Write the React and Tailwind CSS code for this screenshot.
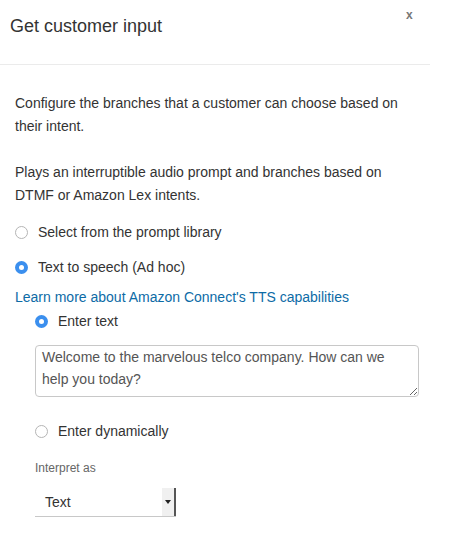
import React, { useState } from "react";

const Radio = ({ checked, onClick, label }) => {
  return (
    <label className="flex items-center cursor-pointer" onClick={onClick}>
      {checked ? (
        <span className="w-[13px] h-[13px] rounded-full bg-[#3b8fee] flex items-center justify-center shrink-0">
          <span className="w-[5px] h-[5px] rounded-full bg-white" />
        </span>
      ) : (
        <span className="w-[13px] h-[13px] rounded-full border border-[#b5b5b5] bg-white shrink-0" />
      )}
      <span className="ml-[10px] text-[14px] text-[#333]">{label}</span>
    </label>
  );
};

const App = () => {
  const [source, setSource] = useState("tts");
  const [mode, setMode] = useState("text");
  const [text, setText] = useState(
    "Welcome to the marvelous telco company. How can we help you today?"
  );

  return (
    <div className="w-[450px] h-[537px] bg-white font-['Liberation_Sans',Arial,sans-serif] text-[#333] overflow-hidden">
      <div className="w-[430px] relative border-b border-[#ebebeb] h-[65px]">
        <h2 className="absolute left-[10px] top-[14px] text-[18px] leading-[24px] text-[#333]">
          Get customer input
        </h2>
        <span className="absolute left-[406px] top-[6px] text-[12px] font-bold text-[#777]">
          x
        </span>
      </div>

      <div className="pl-[15px] pt-[27px]">
        <p className="text-[14px] leading-[23px] w-[400px]">
          Configure the branches that a customer can choose based on their
          intent.
        </p>
        <p className="text-[14px] leading-[23px] w-[400px] mt-[23px]">
          Plays an interruptible audio prompt and branches based on DTMF or
          Amazon Lex intents.
        </p>

        <div className="mt-[15px] flex flex-col gap-[14px]">
          <Radio
            checked={source === "library"}
            onClick={() => setSource("library")}
            label="Select from the prompt library"
          />
          <Radio
            checked={source === "tts"}
            onClick={() => setSource("tts")}
            label="Text to speech (Ad hoc)"
          />
        </div>

        <a
          href="#"
          className="block mt-[11px] text-[14px] leading-[17px] text-[#0d6ba6]"
        >
          Learn more about Amazon Connect's TTS capabilities
        </a>

        <div className="pl-[20px] mt-[5px]">
          <Radio
            checked={mode === "text"}
            onClick={() => setMode("text")}
            label="Enter text"
          />
          <textarea
            value={text}
            onChange={(e) => setText(e.target.value)}
            className="mt-[13px] block w-[384px] h-[52px] border border-[#c8c8c8] rounded-[4px] px-[6px] pt-0 text-[14px] leading-[22px] text-[#555] resize-y outline-none"
          />
          <div className="mt-[24px]">
            <Radio
              checked={mode === "dynamic"}
              onClick={() => setMode("dynamic")}
              label="Enter dynamically"
            />
          </div>
          <div className="mt-[17px] text-[12px] text-[#666]">Interpret as</div>
          <div className="mt-[11px] w-[141px] h-[29px] flex items-stretch border-b border-[#c8c8c8]">
            <span className="flex-1 flex items-center pl-[10px] text-[14px] text-[#333]">
              Text
            </span>
            <span className="w-[14px] bg-[#f0f0f0] border-r-2 border-[#555] flex items-center justify-center">
              <svg width="6" height="4" viewBox="0 0 6 4">
                <path d="M0 0 L6 0 L3 4 Z" fill="#222" />
              </svg>
            </span>
          </div>
        </div>
      </div>
    </div>
  );
};

export default App;
